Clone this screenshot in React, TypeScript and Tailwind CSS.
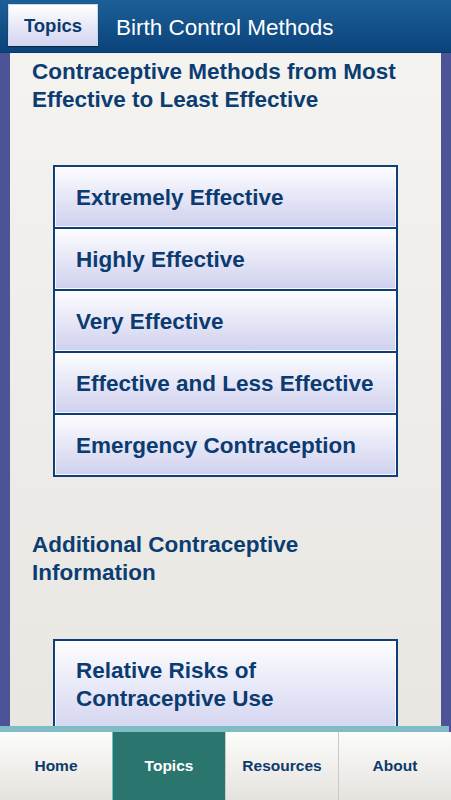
import React from "react";

const font = { fontFamily: '"Liberation Sans", Arial, Helvetica, sans-serif' };

function Item({ label }: { label: React.ReactNode }) {
  return (
    <div className="flex items-center h-[62px] pl-[21px] border-t-2 border-[#0e3f78] bg-gradient-to-b from-[#fdfdff] to-[#cfd0ee] shadow-[inset_0_0_0_1px_rgba(255,255,255,0.8)]">
      <span className="text-[22.5px] font-bold text-[#0b3b70] leading-[28px] pt-[1px]">{label}</span>
    </div>
  );
}

export default function App() {
  const tabs = ["Home", "Topics", "Resources", "About"];
  return (
    <div className="relative w-[451px] h-[800px] overflow-hidden bg-[#4d5397]" style={font}>
      {/* Header */}
      <div className="h-[53px] flex items-center bg-gradient-to-b from-[#1c5f97] to-[#0b437b] border-b border-[#0a3a6b]">
        <div className="ml-[8px] mb-[2px] w-[90px] h-[42px] flex items-center justify-center border border-[#cfd6e8] bg-gradient-to-b from-[#ffffff] to-[#d3d4f0] shadow-[0_1px_1px_rgba(0,0,0,0.4)]">
          <span className="text-[18.5px] font-bold text-[#0c3a6e] pt-[2px]">Topics</span>
        </div>
        <span className="ml-[18px] pt-[4px] text-[22.5px] text-white">Birth Control Methods</span>
      </div>

      {/* Panel */}
      <div className="mx-[10px] h-[747px] bg-gradient-to-b from-[#f4f3f0] to-[#e7e5e0] pt-[5px] pl-[22px]">
        <h1 className="text-[22.5px] leading-[28px] font-bold text-[#0b3d72] whitespace-nowrap">
          Contraceptive Methods from Most
          <br />
          Effective to Least Effective
        </h1>

        <div className="mt-[51px] ml-[21px] w-[345px] border-2 border-t-0 border-[#0e3f78]">
          <Item label="Extremely Effective" />
          <Item label="Highly Effective" />
          <Item label="Very Effective" />
          <Item label="Effective and Less Effective" />
          <Item label="Emergency Contraception" />
        </div>

        <h2 className="mt-[54px] text-[22.5px] leading-[28px] font-bold text-[#0b3d72]">
          Additional Contraceptive
          <br />
          Information
        </h2>

        <div className="mt-[52px] ml-[21px] w-[345px] border-2 border-[#0e3f78]">
          <div className="flex items-start h-[100px] pl-[21px] pt-[16px] bg-gradient-to-b from-[#fdfdff] to-[#cfd0ee] shadow-[inset_0_0_0_1px_rgba(255,255,255,0.8)]">
            <span className="text-[22.5px] font-bold text-[#0b3b70] leading-[28px]">
              Relative Risks of
              <br />
              Contraceptive Use
            </span>
          </div>
        </div>
      </div>

      {/* Tab bar */}
      <div className="absolute left-0 right-0 bottom-0">
        <div className="h-[6px] bg-[#7fbcc5] mr-[2px]" />
        <div className="flex h-[68px]">
          {tabs.map((t, i) => {
            const active = t === "Topics";
            return (
              <div
                key={t}
                className={`flex-1 flex items-center justify-center ${
                  active
                    ? "bg-[#2b756f] border-l border-[#66c4cc]"
                    : "bg-gradient-to-b from-[#fcfcfa] to-[#e5e3de] border-l border-[#c9c9c6]"
                } ${i === 0 ? "border-l-0" : ""}`}
              >
                <span className={`text-[15.5px] font-bold ${active ? "text-white" : "text-[#0c3a6e]"}`}>{t}</span>
              </div>
            );
          })}
        </div>
      </div>
    </div>
  );
}
